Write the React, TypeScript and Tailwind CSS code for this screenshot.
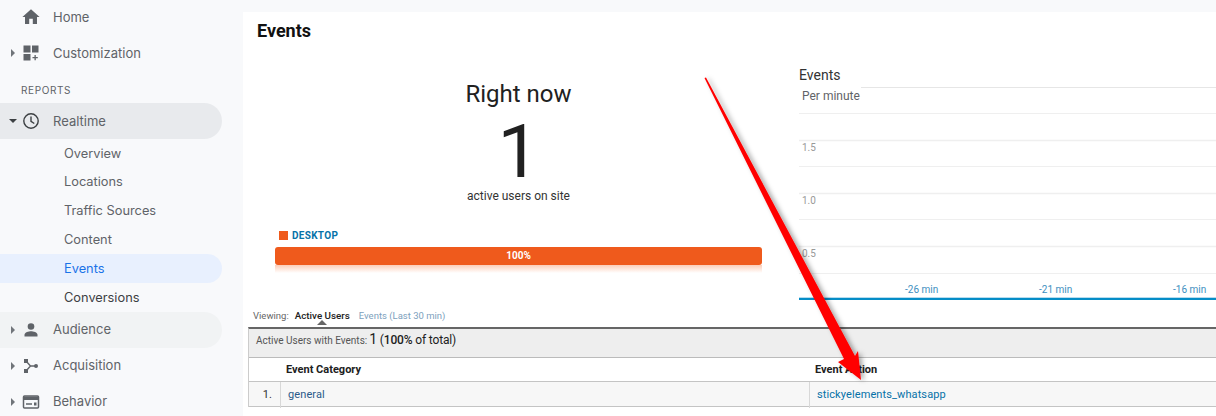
import React from 'react';

const Caret = ({ open }: { open?: boolean }) => (
    <svg width="8" height="8" viewBox="0 0 8 8" className="shrink-0">
        {open ? <path d="M0 2h8L4 6z" fill="#3c4043" /> : <path d="M2 0l4 4-4 4z" fill="#70757a" />}
    </svg>
);

const HomeIcon = () => (
    <svg width="18" height="18" viewBox="0 0 18 18"><path d="M7.200 16v-5.200h3.600V16h4.200V9h2.600L9 1.200.4 9H3v7z" fill="#5f6368" /></svg>
);
const CustomIcon = () => (
    <svg width="18" height="18" viewBox="0 0 18 18" fill="#5f6368"><path d="M1.500 1.500h7v7h-7zM10 1.500h6.500v7H10zM1.500 10h7v6.500h-7zM12.500 11h1.300v2h2v1.300h-2v2h-1.300v-2h-2V13h2z" /></svg>
);
const ClockIcon = () => (
    <svg width="18" height="18" viewBox="0 0 18 18" fill="none" stroke="#3c4043" strokeWidth="1.400"><circle cx="9" cy="9" r="7.200" /><path d="M9 4.500V9.300l3.300 2.200" /></svg>
);
const PersonIcon = () => (
    <svg width="18" height="18" viewBox="0 0 18 18" fill="#5f6368"><circle cx="9" cy="5.500" r="3.300" /><path d="M2.500 15.500v-1.800c0-2.400 4.300-3.500 6.500-3.500s6.500 1.100 6.500 3.500v1.800z" /></svg>
);
const AcquisitionIcon = () => (
    <svg width="18" height="18" viewBox="0 0 18 18"><path d="M4 4l4.500 5L4 14M8.500 9h6" fill="none" stroke="#5f6368" strokeWidth="1.400" /><path d="M2 2h4v4H2zM2 12h4v4H2z" fill="#5f6368" /><circle cx="14" cy="9" r="2" fill="#5f6368" /></svg>
);
const BehaviorIcon = () => (
    <svg width="18" height="18" viewBox="0 0 18 18" fill="none"><rect x="1.500" y="3" width="15" height="12" rx="1" stroke="#5f6368" strokeWidth="1.500" /><path d="M2 3.500h14V7H2z" fill="#5f6368" /><path d="M4 11h6" stroke="#5f6368" strokeWidth="1.500" /><path d="M12 9.500h2.500v3H12z" fill="#5f6368" /></svg>
);

const NavRow = ({ label, icon, caret, active, hover, up }: { label: string; icon: React.ReactNode; caret?: 'open' | 'closed'; active?: boolean; hover?: boolean; up?: boolean }) => (
    <div className={`flex items-center h-9 w-[222px] rounded-r-[18px] ${active ? 'bg-[#e8eaed]' : hover ? 'bg-[#f1f3f4]' : ''}`}>
        <div className="w-[22px] flex justify-center pl-[3px]">{caret && <Caret open={caret === 'open'} />}</div>
        <div className="w-[31px]">{icon}</div>
        <span className={`text-[13px] text-[#5f6368] ${up ? '' : 'pt-[2px]'}`}>{label}</span>
    </div>
);

const SubRow = ({ label, h, active, dark }: { label: string; h: string; active?: boolean; dark?: boolean }) => (
    <div className={`flex items-center w-[222px] pl-16 rounded-r-[15px] text-[12.800px] ${h} ${active ? 'bg-[#e8f0fe] text-[#1a73e8]' : dark ? 'text-[#3c4043]' : 'text-[#5f6368]'}`}>
        {label}
    </div>
);

const Sidebar = () => (
    <aside className="w-[243px] shrink-0 bg-[#f8f9fb] -mt-px font-['Inter',sans-serif]">
        <NavRow label="Home" icon={<HomeIcon />} />
        <NavRow label="Customization" icon={<CustomIcon />} caret="closed" />
        <div className="h-8 pl-[21px] pt-[13px] text-[10px] leading-3 tracking-[0.6px] text-[#5f6368]">REPORTS</div>
        <NavRow label="Realtime" icon={<ClockIcon />} caret="open" active />
        <SubRow label="Overview" h="h-7 pt-[2px]" />
        <SubRow label="Locations" h="h-[29px]" />
        <SubRow label="Traffic Sources" h="h-[29px]" />
        <SubRow label="Content" h="h-[29px]" />
        <SubRow label="Events" h="h-[29px]" active />
        <SubRow label="Conversions" h="h-[29px]" dark />
        <NavRow label="Audience" icon={<PersonIcon />} caret="closed" hover up />
        <NavRow label="Acquisition" icon={<AcquisitionIcon />} caret="closed" up />
        <NavRow label="Behavior" icon={<BehaviorIcon />} caret="closed" up />
    </aside>
);

const Chart = () => (
    <svg width="417" height="215" viewBox="0 0 417 215" className="block">
        <g stroke="#efefef" strokeWidth="1">
            <path d="M62 0.500H417" stroke="#e6e6e6" />
            <path d="M0 26.500H417" />
            <path d="M0 53.500H417" strokeWidth="1.500" />
            <path d="M0 79.500H417" />
            <path d="M0 106.500H417" strokeWidth="1.500" />
            <path d="M0 132.500H417" />
            <path d="M0 159.500H417" strokeWidth="1.500" />
            <path d="M0 186.500H417" />
        </g>
        <g fontSize="10" fill="#999999" fontFamily="Roboto, sans-serif">
            <text x="3" y="64">1.5</text>
            <text x="3" y="117">1.0</text>
            <text x="3" y="170">0.5</text>
        </g>
        <g fontSize="10" fill="#3d8fc0" fontFamily="Roboto, sans-serif">
            <text x="106" y="206">-26 min</text>
            <text x="240" y="206">-21 min</text>
            <text x="374" y="206">-16 min</text>
        </g>
        <path d="M0 210.500H417" stroke="#b7dcee" />
        <path d="M0 212H417" stroke="#058dc7" strokeWidth="2" />
    </svg>
);

const RedArrow = () => (
    <svg width="220" height="320" viewBox="0 0 220 320" className="absolute left-[690px] top-[70px]">
        <defs>
            <filter id="arrowShadow" x="-20%" y="-20%" width="140%" height="140%">
                <feDropShadow dx="3" dy="1" stdDeviation="2.500" floodColor="#000" floodOpacity="0.35" />
            </filter>
        </defs>
        <path d="M14.500 8 L16 7.500 L165 286 L168 281 L171 310 L148 292 L154 289 Z" fill="#ff0000" filter="url(#arrowShadow)" />
    </svg>
);

export default function App() {
    return (
        <div className="relative flex w-[1216px] h-[416px] overflow-hidden bg-[#f8f9fb] font-['Roboto',sans-serif]">
            <Sidebar />
            <main className="flex-1 mt-3 bg-white min-w-0">
                <h1 className="pl-3.5 pt-2 text-lg leading-[22px] font-bold text-[#111111]">Events</h1>
                <div className="flex h-[260px] pt-[1px]">
                    <section className="w-[556px] pl-8 shrink-0">
                        <div className="w-[487px] flex flex-col items-center pt-[37px]">
                            <div className="text-2xl leading-7 text-[#212121]">Right now</div>
                            <div className="text-[75px] leading-[72px] text-[#212121] mt-[7px]">1</div>
                            <div className="text-xs leading-4 text-[#333333] mt-[1px]">active users on site</div>
                        </div>
                        <div className="flex items-center gap-1 ml-1 mt-[25px] h-3">
                            <span className="w-[9px] h-[9px] bg-[#ef5a1c]" />
                            <span className="text-[10px] font-bold tracking-[0.3px] text-[#0672a8]">DESKTOP</span>
                        </div>
                        <div className="w-[487px] mt-1.5 h-[18px] rounded-[3px] bg-[#ef5a1c] text-white text-[10px] font-bold leading-[18px] text-center">100%</div>
                        <div className="w-[487px] h-2 bg-gradient-to-b from-[#fbcdb8] to-white" />
                    </section>
                    <section className="flex-1 min-w-0">
                        <div className="text-sm leading-4 text-[#333333] pt-[24px]">Events</div>
                        <div className="relative mt-[4px]">
                            <Chart />
                            <span className="absolute left-[3px] top-[1px] text-xs leading-4 text-[#5f6368]">Per minute</span>
                        </div>
                    </section>
                </div>
                <div className="ml-[5px] mt-[4px]">
                    <div className="flex items-baseline h-[18px] pt-px pl-[5px] text-[9.800px] leading-[18px]">
                        <span className="text-[9.500px] text-[#666666]">Viewing:</span>
                        <span className="ml-[6px] font-medium text-[#212121] relative">
                            Active Users
                            <span className="absolute left-[22px] top-[13px] w-0 h-0 border-x-[5px] border-x-transparent border-b-[5px] border-b-[#666666]" />
                        </span>
                        <span className="ml-[9px] text-[9.500px] text-[#7d9fbd]">Events (Last 30 min)</span>
                    </div>
                    <div className="border-t-2 border-[#666666] border-l border-l-[#cccccc] mt-[3px] text-[#212121]">
                        <div className="h-[29px] bg-[#eeeeee] border-b border-[#bbbbbb] pl-[7px] pt-[2px] flex items-baseline text-[10px] leading-5 text-[#555555]">
                            Active Users with Events:
                            <span className="ml-[2px] text-xs tracking-[-0.15px] text-[#212121]"><span className="text-sm leading-4">1</span> (<span className="font-medium">100%</span> of total)</span>
                        </div>
                        <div className="grid grid-cols-[32px_529px_1fr] h-[23px] pt-[2px] items-center text-[11px] font-bold text-[#212121]">
                            <span />
                            <span className="pl-[5px]">Event Category</span>
                            <span className="pl-[5px]">Event Action</span>
                        </div>
                        <div className="grid grid-cols-[32px_529px_1fr] h-[26px] bg-[#f7f7f7] border-y border-[#c4c4c4] text-[11px] tracking-[0.1px] leading-[26px]">
                            <span className="text-right pr-2 border-r border-[#d8d8d8] text-[#333333]">1.</span>
                            <span className="pl-[7px] border-r border-[#d8d8d8] text-[#2a5a8a]">general</span>
                            <span className="pl-[7px] text-[#0672a8]">stickyelements_whatsapp</span>
                        </div>
                    </div>
                </div>
            </main>
            <RedArrow />
        </div>
    );
}
